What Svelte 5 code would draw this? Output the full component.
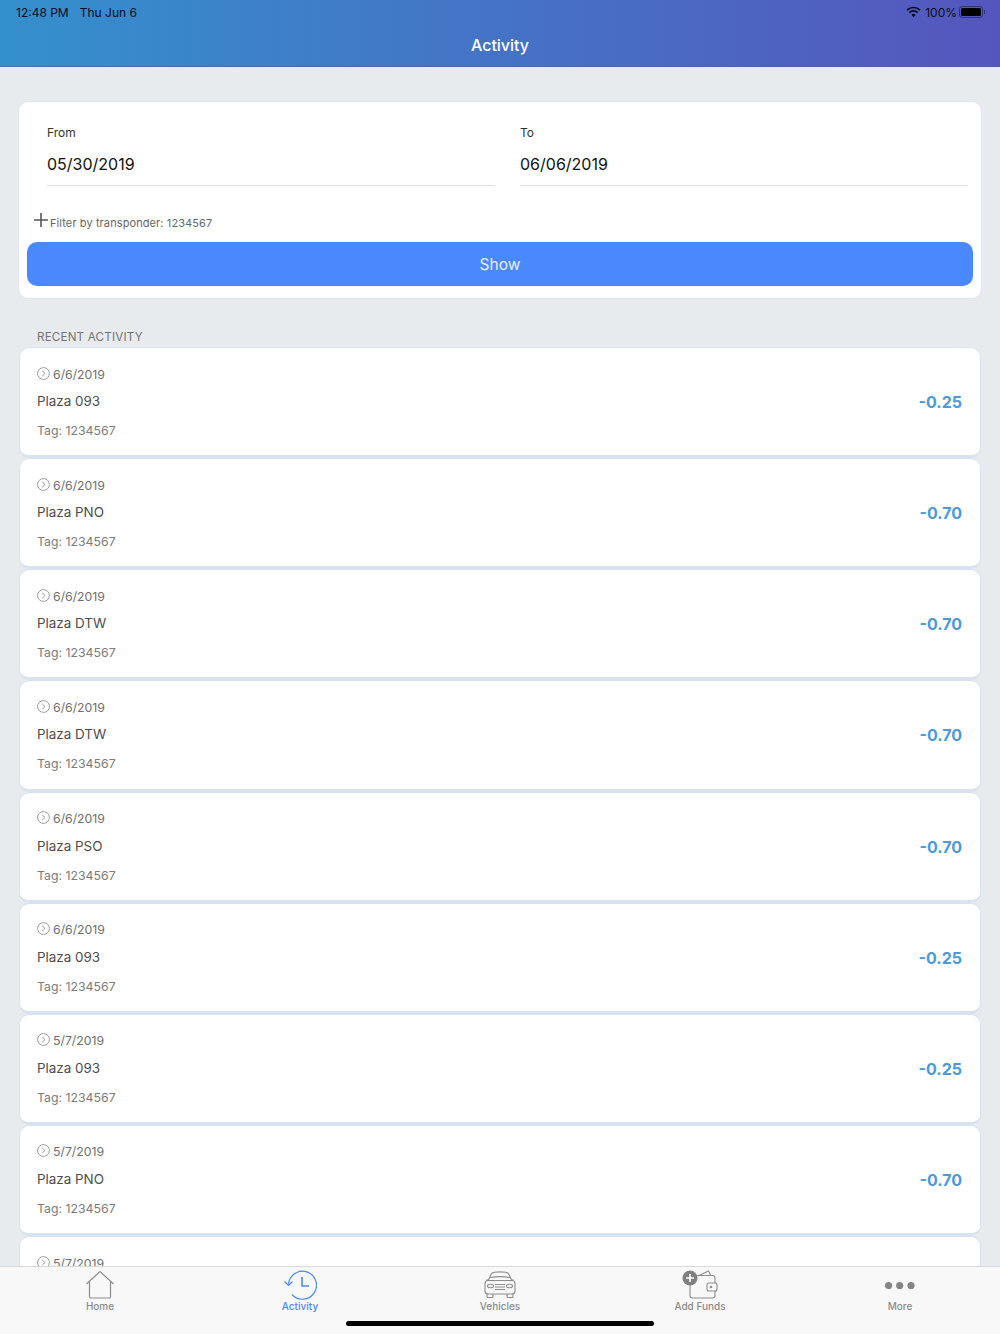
<script>
  const rows = [
    { date: '6/6/2019', plaza: 'Plaza 093', amount: '-0.25' },
    { date: '6/6/2019', plaza: 'Plaza PNO', amount: '-0.70' },
    { date: '6/6/2019', plaza: 'Plaza DTW', amount: '-0.70' },
    { date: '6/6/2019', plaza: 'Plaza DTW', amount: '-0.70' },
    { date: '6/6/2019', plaza: 'Plaza PSO', amount: '-0.70' },
    { date: '6/6/2019', plaza: 'Plaza 093', amount: '-0.25' },
    { date: '5/7/2019', plaza: 'Plaza 093', amount: '-0.25' },
    { date: '5/7/2019', plaza: 'Plaza PNO', amount: '-0.70' },
    { date: '5/7/2019', plaza: 'Plaza 093', amount: '-0.25' }
  ];
</script>

<div class="screen">
  <header class="top">
    <div class="status">
      <div class="status-left"><span>12:48 PM</span><span>Thu Jun 6</span></div>
      <div class="status-right">
        <svg width="15" height="12" viewBox="0 0 15 12">
          <path d="M1 4.2a9.2 9.2 0 0 1 13 0" fill="none" stroke="#0b0b20" stroke-width="1.7" />
          <path d="M3.4 6.6a5.8 5.8 0 0 1 8.2 0" fill="none" stroke="#0b0b20" stroke-width="1.7" />
          <path d="M7.5 11.2 5.4 8.8a3 3 0 0 1 4.2 0z" fill="#0b0b20" />
        </svg>
        <span>100%</span>
        <div class="battery"><div class="battery-fill"></div></div>
        <div class="battery-tip"></div>
      </div>
    </div>
    <h1>Activity</h1>
  </header>

  <main class="content">
    <section class="filter">
      <div class="dates">
        <div class="field">
          <div class="field-label">From</div>
          <div class="field-value">05/30/2019</div>
        </div>
        <div class="field">
          <div class="field-label">To</div>
          <div class="field-value">06/06/2019</div>
        </div>
      </div>
      <div class="transponder">
        <svg width="14" height="14" viewBox="0 0 14 14">
          <path d="M7 0v14M0 7h14" stroke="#555" stroke-width="1.6" fill="none" />
        </svg>
        <span>Filter by transponder: 1234567</span>
      </div>
      <button class="show">Show</button>
    </section>

    <div class="section-title">RECENT ACTIVITY</div>

    <div class="list">
      {#each rows as row}
        <article class="item">
          <div class="item-text">
            <div class="item-date">
              <svg width="13" height="13" viewBox="0 0 13 13">
                <circle cx="6.5" cy="6.5" r="5.9" fill="none" stroke="#8f8f8f" stroke-width="0.9" />
                <path d="M5.2 3.8 8 6.5 5.2 9.2" fill="none" stroke="#8f8f8f" stroke-width="0.9" />
              </svg>
              <span>{row.date}</span>
            </div>
            <div class="item-plaza">{row.plaza}</div>
            <div class="item-tag">Tag: 1234567</div>
          </div>
          <div class="item-amount">{row.amount}</div>
        </article>
      {/each}
    </div>
  </main>

  <nav class="tabs">
    <div class="tab">
      <svg width="30" height="30" viewBox="0 0 30 30" fill="none" stroke="#8c8c8c" stroke-width="1.2">
        <path d="M1.5 14 15 1.5 28.5 14" />
        <path d="M4.5 12v14.5a1.5 1.5 0 0 0 1.5 1.5h18a1.5 1.5 0 0 0 1.5-1.5V12" />
      </svg>
      <span>Home</span>
    </div>
    <div class="tab active">
      <svg width="34" height="30" viewBox="0 0 34 30" fill="none" stroke="#4a88f7" stroke-width="1.2">
        <path d="M5.5 14.5A14 14 0 1 1 9 24.5" />
        <path d="M1.5 11.5 5.5 15.5 9.5 11.5" />
        <path d="M19 7v9h7" stroke-width="1.6" />
      </svg>
      <span>Activity</span>
    </div>
    <div class="tab">
      <svg width="34" height="30" viewBox="0 0 34 30" fill="none" stroke="#8c8c8c" stroke-width="1.1">
        <path d="M5 11 8 4.5C8.6 3 10 2.5 11.5 2.3 15 1.8 19 1.8 22.5 2.3 24 2.5 25.4 3 26 4.5L29 11" />
        <path d="M7 7.5C13 6.5 21 6.5 27 7.5" />
        <path d="M3 10h2.5M28.5 10H31" />
        <rect x="2" y="10.5" width="30" height="13.5" rx="3" />
        <ellipse cx="7.5" cy="16" rx="3" ry="1.8" />
        <ellipse cx="26.5" cy="16" rx="3" ry="1.8" />
        <path d="M12 14.5h10M12 17h10M12 19.5h10" />
        <path d="M4 24v2.5a1 1 0 0 0 1 1h4a1 1 0 0 0 1-1V24M24 24v2.5a1 1 0 0 0 1 1h4a1 1 0 0 0 1-1V24" />
      </svg>
      <span>Vehicles</span>
    </div>
    <div class="tab">
      <svg width="36" height="30" viewBox="0 0 36 30" fill="none" stroke="#8c8c8c" stroke-width="1.1">
        <path d="M16 6 26.5 1 28.5 5" />
        <path d="M8 14v11.5a2.5 2.5 0 0 0 2.5 2.5h20a2.5 2.5 0 0 0 2.5-2.5V8a2.5 2.5 0 0 0-2.5-2.5H14" />
        <rect x="25" y="13" width="10" height="8" rx="2" fill="#f8f8f8" />
        <circle cx="29" cy="17" r="0.8" fill="#8c8c8c" />
        <circle cx="8" cy="8" r="7.5" fill="#7f7f7f" stroke="none" />
        <path d="M8 4v8M4 8h8" stroke="#fff" stroke-width="1.6" />
      </svg>
      <span>Add Funds</span>
    </div>
    <div class="tab">
      <svg width="30" height="30" viewBox="0 0 30 30" fill="#858585">
        <circle cx="3.5" cy="15.5" r="3.6" />
        <circle cx="14.7" cy="15.5" r="3.6" />
        <circle cx="26" cy="15.5" r="3.6" />
      </svg>
      <span>More</span>
    </div>
    <div class="home-bar"></div>
  </nav>
</div>

<style>
  :global(body) {
    margin: 0;
    background: #e8ebee;
  }

  .screen {
    height: 1334px;
    display: flex;
    flex-direction: column;
    overflow: hidden;
    font-family: Inter, "Liberation Sans", sans-serif;
    background: #e8ebee;
  }

  .top {
    height: 67px;
    flex: none;
    box-sizing: border-box;
    background: linear-gradient(90deg, #3490cd 0%, #5556bd 100%);
    border-bottom: 1px solid rgba(90, 90, 150, 0.6);
  }

  .status {
    height: 24px;
    display: flex;
    justify-content: space-between;
    align-items: center;
    padding: 0 15px 0 16px;
    font-size: 12px;
    color: #0b0b20;
  }

  .status-left {
    display: flex;
    gap: 11px;
  }

  .status-right {
    display: flex;
    align-items: center;
    gap: 4px;
  }

  .battery {
    width: 24px;
    height: 12px;
    box-sizing: border-box;
    border: 1px solid rgba(20, 20, 60, 0.55);
    border-radius: 3px;
    padding: 1px;
    margin-left: -2px;
  }

  .battery-fill {
    height: 100%;
    background: #000;
    border-radius: 1.5px;
  }

  .battery-tip {
    width: 1px;
    height: 4px;
    background: rgba(20, 20, 60, 0.6);
    margin-left: -3px;
  }

  h1 {
    margin: 0;
    padding-top: 2px;
    text-align: center;
    font-size: 16px;
    line-height: 38px;
    font-weight: 500;
    color: #fff;
  }

  .content {
    flex: 1;
    min-height: 0;
    overflow: hidden;
    padding: 34px 18px 0;
  }

  .filter {
    height: 198px;
    box-sizing: border-box;
    background: #fff;
    border: 1px solid #dbe5f3;
    border-radius: 10px;
    padding: 0 8px;
  }

  .dates {
    display: flex;
    gap: 25px;
    padding: 23px 5px 0 20px;
  }

  .field {
    flex: 1;
    border-bottom: 1px solid #e0e0e0;
    height: 60px;
  }

  .field-label {
    font-size: 12px;
    line-height: 15px;
    color: #333;
  }

  .field-value {
    margin-top: 13px;
    font-size: 16px;
    line-height: 22px;
    color: #111;
  }

  .transponder {
    display: flex;
    align-items: flex-end;
    gap: 2px;
    height: 18px;
    margin-top: 26px;
    padding-left: 7px;
    font-size: 11px;
    letter-spacing: 0.1px;
    color: #666;
  }

  .transponder svg {
    margin-bottom: 3px;
  }

  .transponder span {
    line-height: 13px;
  }

  .show {
    display: block;
    width: 100%;
    height: 43.5px;
    margin-top: 12px;
    padding: 2px 0 0;
    background: #4989fd;
    border: none;
    border-radius: 10px;
    color: #e6f0ff;
    font-family: inherit;
    font-size: 15.5px;
  }

  .section-title {
    margin: 31px 0 0 19px;
    height: 17px;
    font-size: 11.6px;
    line-height: 14px;
    color: #737373;
    letter-spacing: 0.2px;
  }

  .list {
    display: flex;
    flex-direction: column;
    padding: 0 1px;
  }

  .item {
    height: 111.14px;
    flex: none;
    box-sizing: border-box;
    display: flex;
    justify-content: space-between;
    align-items: center;
    background: #fff;
    border: 1px solid #d8e3f2;
    border-bottom-width: 3px;
    border-radius: 10px;
    padding: 0 18px 0 17px;
  }

  .item-text {
    align-self: flex-start;
    padding-top: 18px;
  }

  .item-date {
    display: flex;
    align-items: center;
    gap: 3px;
    height: 16px;
    font-size: 12.3px;
    color: #6f6f6f;
  }

  .item-date svg {
    margin-top: -2px;
  }

  .item-plaza {
    margin-top: 10px;
    font-size: 13.4px;
    line-height: 18px;
    color: #4c4c4c;
  }

  .item-tag {
    margin-top: 13px;
    font-size: 12.3px;
    line-height: 16px;
    color: #7b7b7b;
  }

  .item-amount {
    font-size: 16px;
    font-weight: 700;
    color: #4c9ad9;
    margin-top: 1px;
  }

  .tabs {
    position: relative;
    height: 68px;
    flex: none;
    box-sizing: border-box;
    display: grid;
    grid-template-columns: repeat(5, 1fr);
    background: #f8f8f8;
    border-top: 1px solid #d9d9d9;
  }

  .tab {
    display: flex;
    flex-direction: column;
    align-items: center;
    padding-top: 3px;
    font-size: 10px;
    font-weight: 500;
    color: #8c8c8c;
  }

  .tab span {
    line-height: 12px;
  }

  .tab.active {
    color: #4a88f7;
  }

  .home-bar {
    position: absolute;
    left: 346px;
    bottom: 8px;
    width: 308px;
    height: 5px;
    border-radius: 3px;
    background: #000;
  }
</style>
